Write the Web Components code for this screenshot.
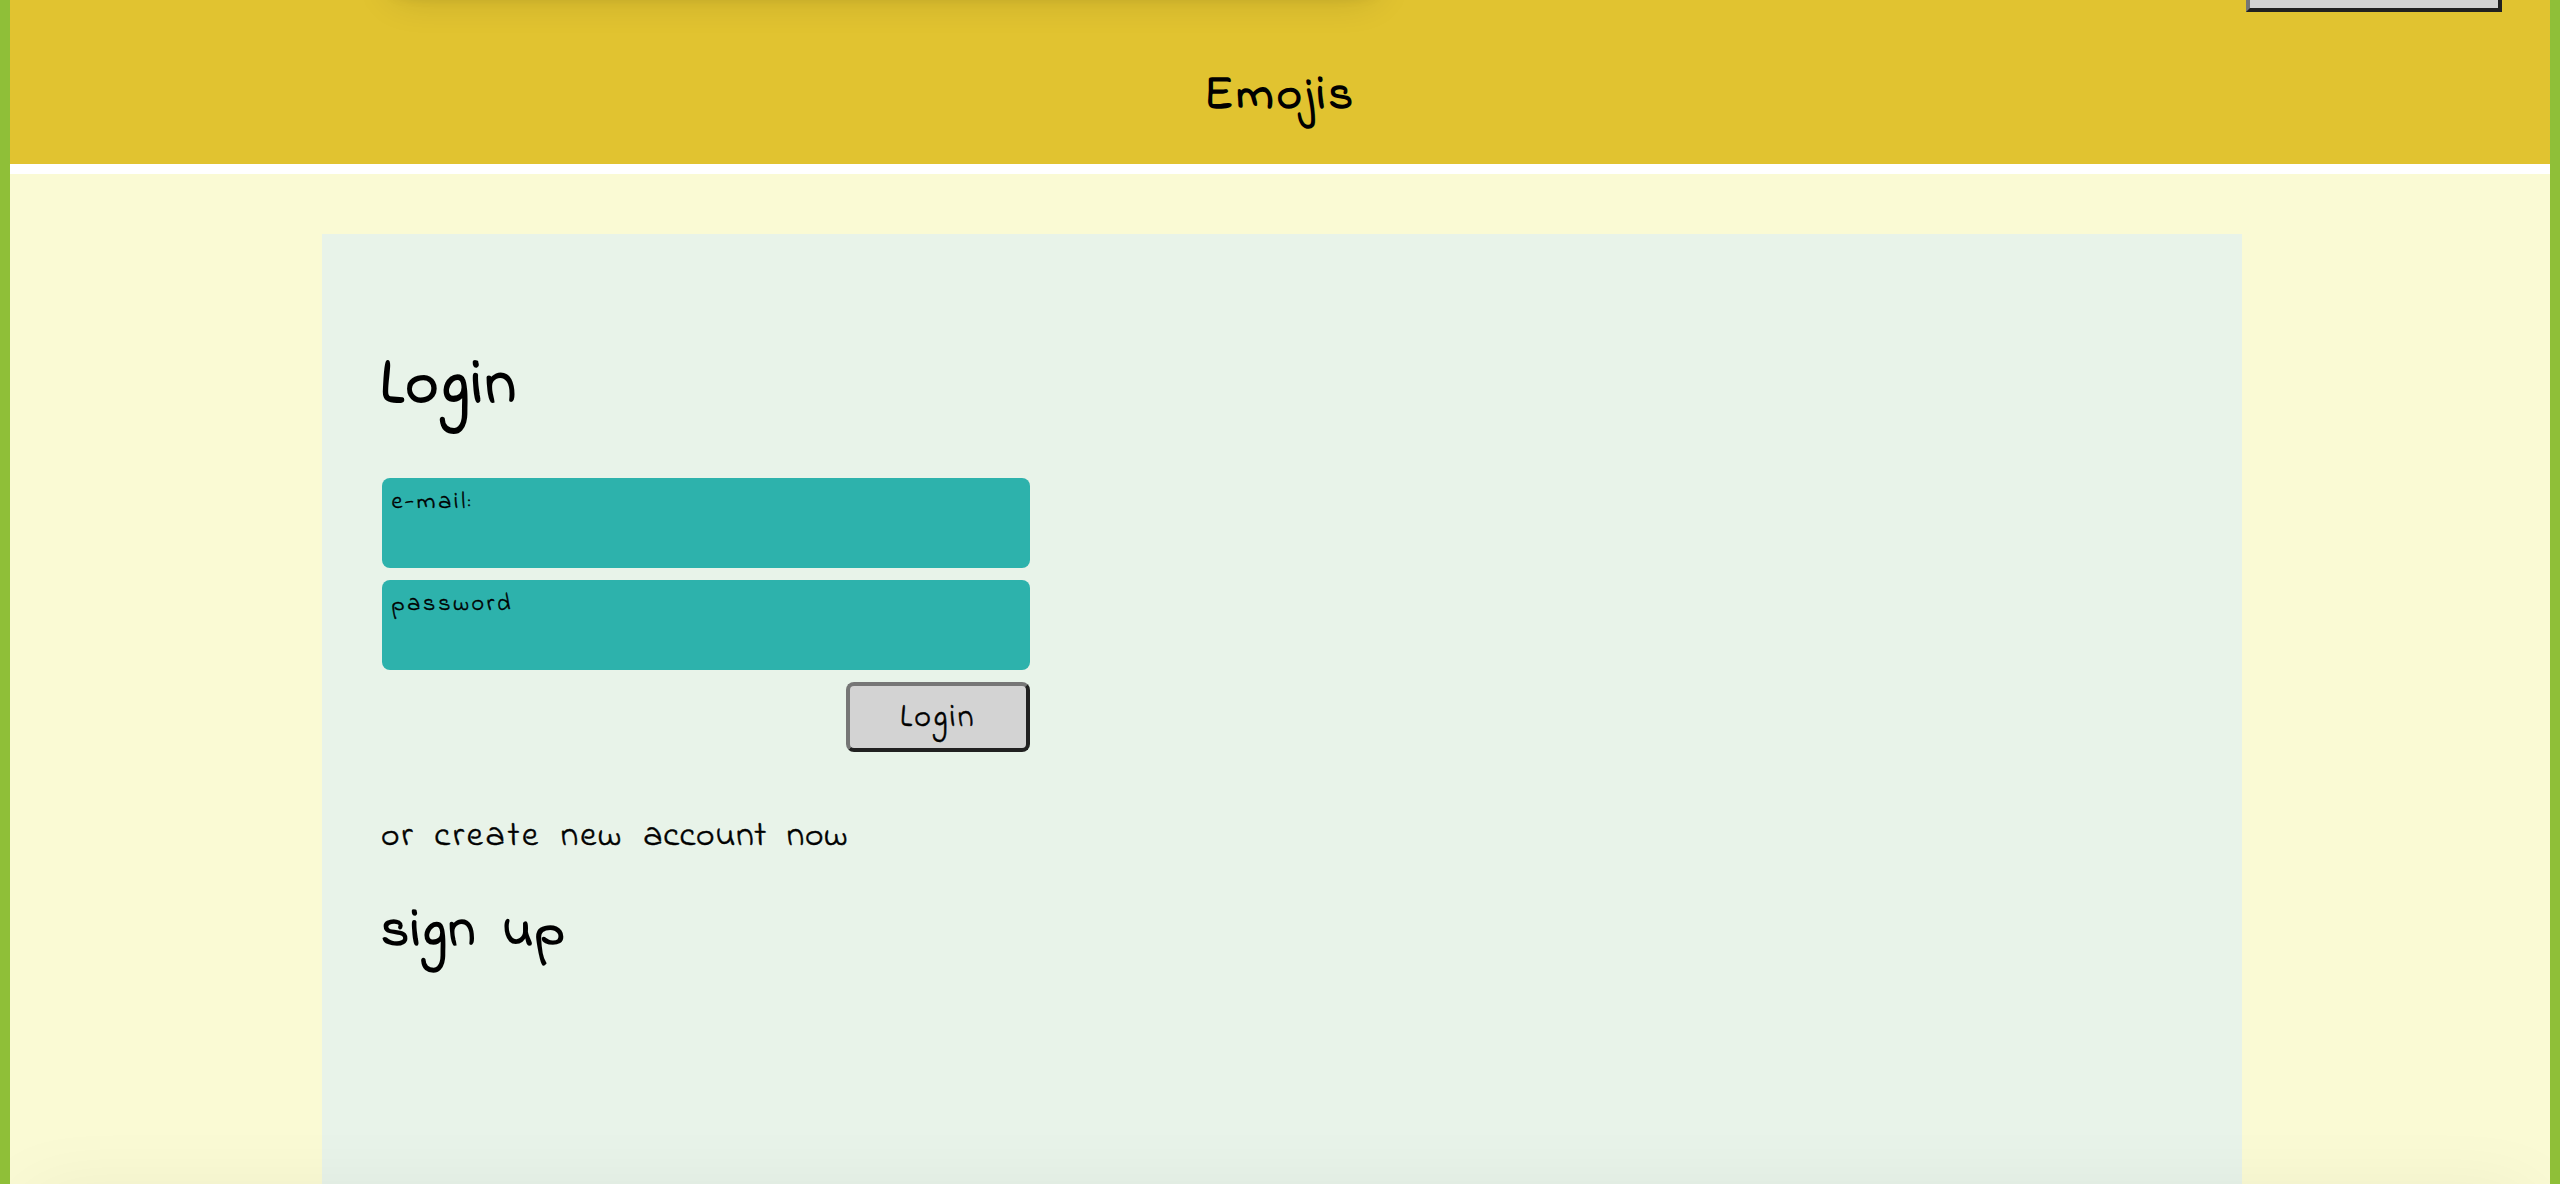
<!DOCTYPE html>
<html lang="en">
<head>
<meta charset="utf-8">
<title>Emojis</title>
<style>
  html, body { margin: 0; height: 100%; overflow: hidden; }
  body { font-family: "Indie Flower", Lato, sans-serif; color: #000; background: #fff; }
  .wide { letter-spacing: 2.8px; }
  .tight { letter-spacing: .7px; }
</style>
</head>
<body>
<emoji-app>
  <app-header slot="header">Emojis</app-header>
  <login-panel>
    <panel-title slot="title">Login</panel-title>
    <text-box>e-mail:</text-box>
    <text-box>password</text-box>
    <raised-button slot="action">Login</raised-button>
    <span slot="note">or <span class="wide">create</span> new <span class="tight">account</span> <span class="tight">now</span></span>
    <panel-title slot="signup" small>sign up</panel-title>
  </login-panel>
</emoji-app>
<script>
class Base extends HTMLElement {
  constructor() {
    super();
    this.attachShadow({ mode: 'open' }).innerHTML = this.constructor.html;
  }
}

customElements.define('emoji-app', class extends Base {
  static html = `
    <style>
      :host { display: flex; flex-direction: column; gap: 10px; height: 100vh; box-sizing: border-box;
              border: solid #8fbf38; border-width: 0 10px; position: relative; overflow: hidden; }
      main { flex: 1; min-height: 0; background: #fafad4; padding: 60px 308px 0 312px; display: flex; }
      .edge { position: absolute; left: 20px; right: 20px; bottom: -60px; height: 40px;
              box-shadow: 0 0 80px rgba(0,0,0,.1); pointer-events: none; }
    </style>
    <slot name="header"></slot>
    <main><slot></slot></main>
    <div class="edge"></div>`;
});

customElements.define('app-header', class extends Base {
  static html = `
    <style>
      :host { display: flex; justify-content: center; box-sizing: border-box; height: 164px; padding-top: 61px;
              background: #e1c330; position: relative; overflow: hidden;
              font-size: 48px; font-weight: bold; line-height: 71px; letter-spacing: 3.2px; }
      .card { position: absolute; left: 386px; width: 976px; height: 100px; top: -118px;
              box-shadow: 0 8px 16px rgba(0,0,0,.2), 0 12px 40px rgba(0,0,0,.19); }
      .btn { position: absolute; right: 48px; top: -58px; width: 256px; height: 70px; box-sizing: border-box;
             background: #d3d3d3; border: 4px solid; border-color: #767676 #212121 #212121 #767676; }
    </style>
    <div class="card"></div><div class="btn"></div>
    <slot></slot>`;
});

customElements.define('login-panel', class extends Base {
  static html = `
    <style>
      :host { display: block; flex: 1; background: #e8f3e9; padding: 106px 60px 0 58px; }
      form { display: flex; flex-direction: column; gap: 12px; width: 648px; margin: 44px 0 0 2px; }
      .action { display: flex; justify-content: flex-end; }
      p { margin: 58px 0 28px 1px; font-size: 35.5px; line-height: 53px; letter-spacing: 2px; word-spacing: 9px;
          -webkit-text-stroke: .5px #000; }
    </style>
    <slot name="title"></slot>
    <form><slot></slot><div class="action"><slot name="action"></slot></div></form>
    <p><slot name="note"></slot></p>
    <slot name="signup"></slot>`;
});

customElements.define('panel-title', class extends Base {
  static html = `
    <style>
      :host { display: block; font-size: 63px; font-weight: bold; line-height: 94px; letter-spacing: 2.3px; }
      :host([small]) { padding-left: 1px; font-size: 55px; line-height: 82px; letter-spacing: 1.5px; word-spacing: 10px; }
    </style>
    <slot></slot>`;
});

customElements.define('text-box', class extends Base {
  static html = `
    <style>
      :host { display: block; box-sizing: border-box; height: 90px; padding: 7px 9.5px; border-radius: 8px;
              background: #2db2ac; font-size: 24px; line-height: 35px; letter-spacing: 2.8px;
              -webkit-text-stroke: .4px #000; }
    </style>
    <slot></slot>`;
});

customElements.define('raised-button', class extends Base {
  static html = `
    <style>
      :host { display: block; box-sizing: border-box; width: 184px; height: 70px; padding-top: 9px; border-radius: 8px;
              border: 4px solid; border-color: #767676 #212121 #212121 #767676; background: #d3d3d3;
              text-align: center; font-size: 32px; line-height: 47px; letter-spacing: 2.3px;
              -webkit-text-stroke: .5px #000; }
    </style>
    <slot></slot>`;
});
</script>
</body>
</html>
